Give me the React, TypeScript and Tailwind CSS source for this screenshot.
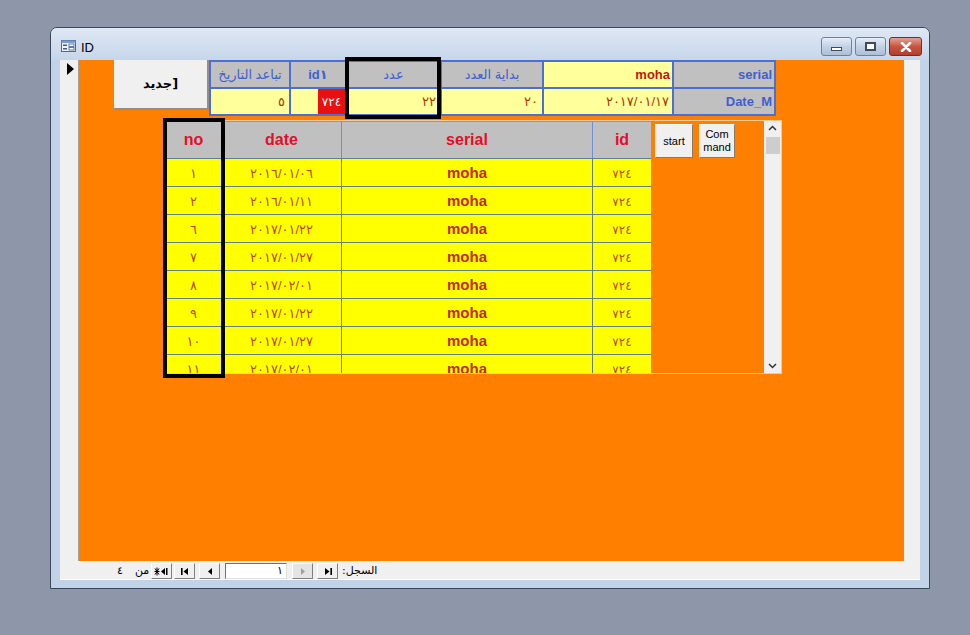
import React from 'react'

const font = { fontFamily: '"Liberation Sans", "DejaVu Sans", Arial, sans-serif' }

const rows = [
  { no: '١', date: '٢٠١٦/٠١/٠٦' },
  { no: '٢', date: '٢٠١٦/٠١/١١' },
  { no: '٦', date: '٢٠١٧/٠١/٢٢' },
  { no: '٧', date: '٢٠١٧/٠١/٢٧' },
  { no: '٨', date: '٢٠١٧/٠٢/٠١' },
  { no: '٩', date: '٢٠١٧/٠١/٢٢' },
  { no: '١٠', date: '٢٠١٧/٠١/٢٧' },
  { no: '١١', date: '٢٠١٧/٠٢/٠١' },
]

const FormIcon = () => (
  <svg width="15" height="12" viewBox="0 0 15 12">
    <rect x="0.5" y="0.5" width="14" height="11" fill="#eef3fa" stroke="#4a6a9a" />
    <rect x="0.5" y="0.5" width="14" height="2.5" fill="#7f9cc8" />
    <rect x="2" y="4.5" width="4" height="1.5" fill="#3d5c8e" />
    <rect x="8" y="4" width="5" height="2.5" fill="#fff" stroke="#3d5c8e" strokeWidth="0.8" />
    <rect x="2" y="8" width="4" height="1.5" fill="#3d5c8e" />
    <rect x="8" y="7.5" width="5" height="2.5" fill="#fff" stroke="#3d5c8e" strokeWidth="0.8" />
  </svg>
)

const TitleButton = ({ kind }: { kind: 'min' | 'max' | 'close' }) => {
  const close = kind === 'close'
  return (
    <div
      className={
        'flex h-[19px] items-center justify-center rounded-[3px] border ' +
        (close
          ? 'w-[33px] border-[#7a2a20] bg-gradient-to-b from-[#e3a094] via-[#c7553f] to-[#b0402c]'
          : 'w-[31px] border-[#6f829c] bg-gradient-to-b from-[#e6eef8] via-[#c2d2e6] to-[#aebfd6]')
      }
    >
      {kind === 'min' && <div className="mt-[4px] h-[4px] w-[11px] border border-[#3c4b60] bg-white" />}
      {kind === 'max' && <div className="h-[9px] w-[11px] border-2 border-[#3c4b60] bg-white" />}
      {close && (
        <svg width="12" height="10" viewBox="0 0 12 10">
          <path d="M2 1 L10 9 M10 1 L2 9" stroke="#ffffff" strokeWidth="2.6" strokeLinecap="round" />
        </svg>
      )}
    </div>
  )
}

const NavBtn = ({ children, disabled }: { children: React.ReactNode; disabled?: boolean }) => (
  <div
    className={
      'flex h-[16px] w-[21px] items-center justify-center border border-t-white border-l-white border-r-[#808080] border-b-[#808080] ' +
      (disabled ? 'bg-[#e4e4e4]' : 'bg-[#f0f0f0]')
    }
  >
    {children}
  </div>
)

export default function App() {
  return (
    <div className="h-[635px] w-[970px] overflow-hidden bg-[#8e97a9] pl-[50px] pt-[27px]" style={font}>
      {/* window */}
      <div className="flex h-[562px] w-[880px] flex-col rounded-t-[7px] border border-[#39475a] bg-[#c3d3e7]">
        {/* title bar */}
        <div className="flex h-[32px] items-start rounded-t-[6px] bg-gradient-to-b from-[#dfe8f4] to-[#c6d6ea] pl-[10px] pr-[7px]">
          <div className="mt-[12px]">
            <FormIcon />
          </div>
          <span className="ml-[5px] mt-[10px] text-[13px] text-black">ID</span>
          <div className="ml-auto mt-[9px] flex gap-[3px]">
            <TitleButton kind="min" />
            <TitleButton kind="max" />
            <TitleButton kind="close" />
          </div>
        </div>

        {/* client */}
        <div className="flex flex-1 pb-[7px] pl-[9px] pr-[8px]">
          <div className="flex h-[520px] w-[860px] flex-col border-b border-white bg-[#f0f0f0]">
            <div className="flex h-[502px]">
              {/* record selector */}
              <div className="w-[19px] border-r border-[#a0a0a0] pl-[7px] pt-[3px]">
                <svg width="8" height="12" viewBox="0 0 8 12">
                  <path d="M0 0 L7 6 L0 12 Z" fill="#000" />
                </svg>
              </div>

              {/* orange form body */}
              <div className="w-[825px] bg-[#ff8000]">
                {/* header section */}
                <div className="flex items-start">
                  <div className="ml-[35px] flex h-[50px] w-[95px] items-center justify-center border-b-2 border-r-2 border-[#9a8d80] bg-[#f0f0f0]">
                    <span dir="rtl" className="text-[13px] font-bold text-black" style={{ fontFamily: '"DejaVu Sans", sans-serif' }}>
                      [جديد
                    </span>
                  </div>

                  <div className="relative">
                    <div className="grid grid-cols-[78px_54px_93px_100px_128px_100px] grid-rows-[25px_25px] gap-[2px] bg-[#4d6fd0] p-[2px] text-[13px]">
                      <div className="flex items-center justify-center bg-[#c0c0c0] text-[#3f5fcf]">تباعد التاريخ</div>
                      <div className="flex items-center justify-center bg-[#c0c0c0] font-bold text-[#3f5fcf]">id١</div>
                      <div className="flex items-center justify-center bg-[#c0c0c0] text-[#3f5fcf]">عدد</div>
                      <div className="flex items-center justify-center bg-[#c0c0c0] text-[#3f5fcf]">بداية العدد</div>
                      <div className="flex items-center justify-end bg-[#ffff9c] pr-[2px] font-bold text-[#c01810]">moha</div>
                      <div className="flex items-center justify-end bg-[#c0c0c0] pr-[2px] font-bold text-[#3f5fcf]">serial</div>

                      <div className="flex items-center justify-end bg-[#ffff9c] pr-[4px] text-[#a83800]">٥</div>
                      <div className="flex">
                        <div className="w-[27px] bg-[#ffff9c]" />
                        <div className="flex flex-1 items-center justify-center bg-[#e81010] text-[12px] tracking-[1px] text-white">٧٢٤</div>
                      </div>
                      <div className="flex items-center justify-end bg-[#ffff9c] pr-[4px] text-[#a83800]">٢٢</div>
                      <div className="flex items-center justify-end bg-[#ffff9c] pr-[4px] text-[#a83800]">٢٠</div>
                      <div className="flex items-center justify-end bg-[#ffff9c] pr-[3px] text-[#a83800]">٢٠١٧/٠١/١٧</div>
                      <div className="flex items-center justify-end bg-[#c0c0c0] pr-[2px] font-bold text-[#3f5fcf]">Date_M</div>
                    </div>
                    {/* highlight around عدد */}
                    <div className="absolute left-[136px] top-[-3px] h-[62px] w-[96px] border-4 border-black" />
                  </div>
                </div>

                {/* subform */}
                <div className="relative ml-[86px] mt-[4px] flex h-[254px] w-[617px] border border-[#f6c99a]">
                  <div className="flex flex-1 overflow-hidden pt-[1px]">
                    <div className="flex w-[485px] flex-col">
                      <div className="grid h-[36px] shrink-0 grid-cols-[56px_120px_251px_58px] bg-[#c0c0c0] text-[16px] font-bold text-[#e0102a]">
                        <div className="flex items-center justify-center border-r border-[#6f8fd8]">no</div>
                        <div className="flex items-center justify-center border-r border-[#6f8fd8]">date</div>
                        <div className="flex items-center justify-center border-r border-[#6f8fd8]">serial</div>
                        <div className="flex items-center justify-center">id</div>
                      </div>
                      {rows.map((r, i) => (
                        <div
                          key={i}
                          className="grid h-[28px] shrink-0 grid-cols-[56px_120px_251px_58px] border-t border-[#60808a] bg-[#ffff00] text-[13px]"
                        >
                          <div className="flex items-center justify-center border-r border-[#60808a] pt-[2px] text-[#b84a00]">{r.no}</div>
                          <div className="flex items-center justify-center border-r border-[#60808a] pt-[2px] tracking-[0.5px] text-[#b84a00]">
                            {r.date}
                          </div>
                          <div className="flex items-center justify-center border-r border-[#60808a] pt-[2px] text-[15px] font-bold text-[#c02a10]">
                            moha
                          </div>
                          <div className="flex items-center justify-center pt-[2px] text-[12px] tracking-[1px] text-[#b84a00]">٧٢٤</div>
                        </div>
                      ))}
                    </div>
                    <div className="ml-[4px] mt-[2px] flex items-start gap-[6px]">
                      <div className="flex h-[34px] w-[38px] items-center justify-center border border-b-[#8a7a6a] border-r-[#8a7a6a] border-l-white border-t-white bg-[#f0f0f0] text-[11px] text-black">
                        start
                      </div>
                      <div className="flex h-[34px] w-[36px] flex-col items-center justify-center border border-b-[#8a7a6a] border-r-[#8a7a6a] border-l-white border-t-white bg-[#f0f0f0] text-[11px] leading-[13px] text-black">
                        <span>Com</span>
                        <span>mand</span>
                      </div>
                    </div>
                  </div>

                  {/* scrollbar */}
                  <div className="flex w-[17px] flex-col items-center bg-[#f0f0f0]">
                    <svg className="mt-[4px]" width="9" height="6" viewBox="0 0 9 6">
                      <path d="M1 5 L4.5 1.5 L8 5" fill="none" stroke="#333" strokeWidth="1.5" />
                    </svg>
                    <div className="mt-[6px] h-[17px] w-[14px] bg-[#cdcdcd]" />
                    <svg className="mb-[4px] mt-auto" width="9" height="6" viewBox="0 0 9 6">
                      <path d="M1 1 L4.5 4.5 L8 1" fill="none" stroke="#333" strokeWidth="1.5" />
                    </svg>
                  </div>

                  {/* highlight around no column */}
                  <div className="absolute left-[-3px] top-[-3px] h-[260px] w-[62px] border-4 border-black" />
                </div>
              </div>

              {/* right strip */}
              <div className="w-[16px] bg-[#f0f0f0]" />
            </div>

            {/* navigation bar */}
            <div className="flex h-[18px] items-center pt-[2px] text-[11px] text-black" style={{ fontFamily: '"DejaVu Sans", sans-serif' }}>
              <span className="ml-[57px] w-[10px]">٤</span>
              <span className="ml-[8px] w-[14px]">من</span>
              <div className="ml-[2px]">
                <NavBtn>
                  <svg width="15" height="9" viewBox="0 0 15 9">
                    <path d="M3 0.5 V8.5 M0.5 4.5 H5.5 M1 1.5 L5 7.5 M5 1.5 L1 7.5" stroke="#000" strokeWidth="1" />
                    <path d="M7 4.5 L11 1 V8 Z" fill="#000" />
                    <rect x="12" y="1" width="1.5" height="7" fill="#000" />
                  </svg>
                </NavBtn>
              </div>
              <div className="ml-[2px]">
                <NavBtn>
                  <svg width="10" height="9" viewBox="0 0 10 9">
                    <rect x="1" y="1" width="1.6" height="7" fill="#000" />
                    <path d="M3.5 4.5 L8 1 V8 Z" fill="#000" />
                  </svg>
                </NavBtn>
              </div>
              <div className="ml-[4px]">
                <NavBtn>
                  <svg width="6" height="9" viewBox="0 0 6 9">
                    <path d="M1 4.5 L5 1 V8 Z" fill="#000" />
                  </svg>
                </NavBtn>
              </div>
              <div className="ml-[5px] flex h-[16px] w-[62px] items-center justify-end border border-b-[#e0e0e0] border-l-[#707070] border-r-[#e0e0e0] border-t-[#707070] bg-white pr-[3px]">
                ١
              </div>
              <div className="ml-[5px]">
                <NavBtn disabled>
                  <svg width="6" height="9" viewBox="0 0 6 9">
                    <path d="M5 4.5 L1 1 V8 Z" fill="#a0a0a0" />
                  </svg>
                </NavBtn>
              </div>
              <div className="ml-[4px]">
                <NavBtn>
                  <svg width="10" height="9" viewBox="0 0 10 9">
                    <path d="M6.5 4.5 L2 1 V8 Z" fill="#000" />
                    <rect x="7.4" y="1" width="1.6" height="7" fill="#000" />
                  </svg>
                </NavBtn>
              </div>
              <span dir="rtl" className="ml-[4px]">
                السجل:
              </span>
            </div>
          </div>
        </div>
      </div>
    </div>
  )
}
